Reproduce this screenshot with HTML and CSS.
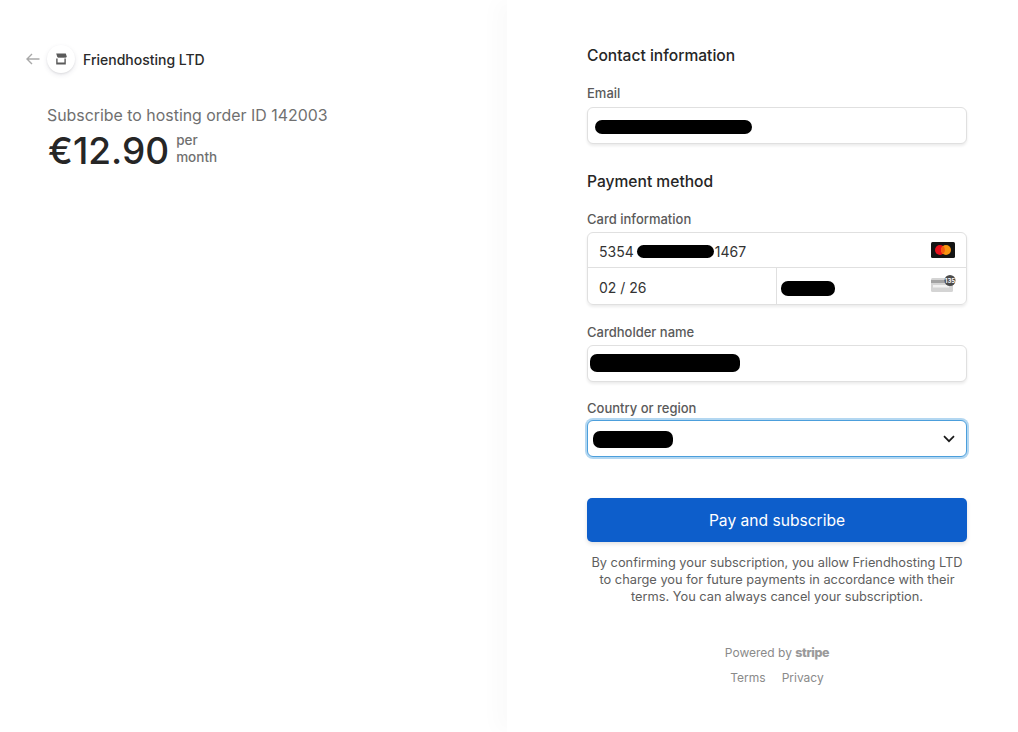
FILE: index.html
```html
<!DOCTYPE html>
<html lang="en">
<head>
    <meta charset="UTF-8">
    <title>Subscribe to hosting order ID 142003</title>
    <link rel="stylesheet" href="styles.css">
</head>
<body>
    <div class="page">
        <div class="summary">
            <div class="merchant">
                <svg class="back" width="14" height="12" viewBox="0 0 14 12" fill="none">
                    <path d="M6 1 1 6l5 5M1 6h12.5" stroke="#a9a9a9" stroke-width="1.4"/>
                </svg>
                <div class="logo">
                    <svg width="12" height="12" viewBox="0 0 12 12">
                        <path d="M1.2 .6h9.6l1 3.2q-.9 1.2-1.9.7-1 .6-1.9 0-1 .6-2 0-.9.6-1.9 0-1 .5-1.9-.7z" fill="#5a5a5a"/>
                        <path d="M1.2 5.4h1.4v4.2h6.8V5.4h1.4v6H1.2z" fill="#5a5a5a"/>
                    </svg>
                </div>
                <span class="merchant-name">Friendhosting LTD</span>
            </div>
            <p class="product">Subscribe to hosting order ID 142003</p>
            <div class="price-row">
                <span class="price">€12.90</span>
                <span class="interval">per<br>month</span>
            </div>
        </div>
        <div class="checkout">
            <h2 class="heading">Contact information</h2>
            <label class="label label-email">Email</label>
            <div class="input">
                <span class="redact redact-email"></span>
            </div>

            <h2 class="heading heading-pay">Payment method</h2>
            <label class="label label-card">Card information</label>
            <div class="card-box">
                <div class="card-row">
                    <span class="card-value">5354<span class="redact redact-number"></span>1467</span>
                    <svg class="brand" width="24" height="16" viewBox="0 0 24 16">
                        <rect width="24" height="16" rx="1.5" fill="#141414"/>
                        <circle cx="9" cy="8" r="5" fill="#e8101c"/>
                        <circle cx="15" cy="8" r="5" fill="#f79410"/>
                        <path d="M12 4a5 5 0 0 1 0 8 5 5 0 0 1 0-8z" fill="#f55a10"/>
                    </svg>
                </div>
                <div class="card-split">
                    <div class="card-expiry">02 / 26</div>
                    <div class="card-cvc">
                        <span class="redact redact-cvc"></span>
                        <svg class="cvc-icon" width="25" height="17" viewBox="0 0 25 17">
                            <rect x="0" y="3" width="22" height="14" rx="1.5" fill="#d4d4d4"/>
                            <rect x="0" y="5" width="22" height="3" fill="#a3a3a3"/>
                            <rect x="2" y="10" width="16" height="2.5" fill="#f2f2f2"/>
                            <circle cx="19" cy="5.5" r="5.5" fill="#4a4a4a"/>
                            <text x="19" y="7.6" font-size="6" font-weight="700" fill="#fff" text-anchor="middle" font-family="Inter, sans-serif">135</text>
                        </svg>
                    </div>
                </div>
            </div>

            <label class="label label-name">Cardholder name</label>
            <div class="input">
                <span class="redact redact-name"></span>
            </div>

            <label class="label label-country">Country or region</label>
            <div class="input input-focus">
                <span class="redact redact-country"></span>
                <svg width="12" height="8" viewBox="0 0 12 8" fill="none">
                    <path d="M1 1.2 6 6.2l5-5" stroke="#1a1a1a" stroke-width="1.7"/>
                </svg>
            </div>

            <button class="pay">Pay and subscribe</button>
            <p class="legal">By confirming your subscription, you allow Friendhosting LTD to charge you for future payments in accordance with their terms. You can always cancel your subscription.</p>

            <div class="powered">Powered by <b class="stripe">stripe</b></div>
            <div class="links">
                <span>Terms</span>
                <span>Privacy</span>
            </div>
        </div>
    </div>
</body>
</html>
```

FILE: styles.css
```css
* {
    margin: 0;
    box-sizing: border-box;
}

body {
    background-color: #fff;
    font-family: Inter, "Liberation Sans", sans-serif;
    color: #1a1a1a;
}

.page {
    display: flex;
    height: 732px;
    overflow: hidden;
}

.summary {
    width: 507px;
    padding: 44px 0 0 26px;
}

.merchant {
    display: flex;
    align-items: center;
    height: 30px;
}

.back {
    margin-right: 7px;
}

.logo {
    width: 28px;
    height: 28px;
    border-radius: 50%;
    background-color: #fff;
    box-shadow: 0 2px 5px rgba(50, 50, 93, 0.1), 0 1px 2px rgba(0, 0, 0, 0.08);
    display: flex;
    align-items: center;
    justify-content: center;
}

.merchant-name {
    margin-left: 8px;
    font-size: 14px;
    font-weight: 450;
    color: #2a2a2a;
}

.product {
    margin: 30px 0 0 21px;
    font-size: 15.9px;
    line-height: 24px;
    font-weight: 400;
    color: #707070;
}

.price-row {
    display: flex;
    align-items: center;
    margin: 1px 0 0 22px;
}

.price {
    font-size: 37px;
    line-height: 44px;
    font-weight: 500;
    color: #262626;
}

.interval {
    margin: -4px 0 0 7px;
    font-size: 13.5px;
    line-height: 17px;
    font-weight: 500;
    color: #707070;
}

.checkout {
    flex: 1;
    padding: 45px 51px 0 80px;
    box-shadow: -12px 0 18px rgba(0, 0, 0, 0.02);
}

.heading {
    font-size: 15.6px;
    line-height: 22px;
    font-weight: 450;
    color: #262626;
}

.heading-pay {
    margin-top: 27px;
}

.label {
    display: block;
    font-size: 13px;
    line-height: 16px;
    font-weight: 450;
    color: #5a5a5a;
}

.label-email {
    margin-top: 18px;
    margin-bottom: 6px;
}

.label-card {
    margin-top: 18px;
    margin-bottom: 5px;
}

.label-name {
    margin-top: 19px;
    margin-bottom: 5px;
}

.label-country {
    margin-top: 18px;
    margin-bottom: 4px;
}

.input {
    height: 37px;
    display: flex;
    align-items: center;
    justify-content: space-between;
    background-color: #fff;
    border: 1px solid #e0e0e0;
    border-radius: 6px;
    box-shadow: 0 2px 3px rgba(0, 0, 0, 0.08);
}

.input-focus {
    border: 1px solid #4c9fdc;
    box-shadow: 0 0 0 2px #b3d7f1;
    padding-right: 11px;
}

.redact {
    display: inline-block;
    background-color: #000;
    border-radius: 7px;
}

.redact-email {
    width: 157px;
    height: 14px;
    margin: 3px 0 0 7px;
}

.redact-name {
    width: 150px;
    height: 18px;
    margin: -2px 0 0 2px;
}

.redact-country {
    width: 80px;
    height: 17px;
    margin: 2px 0 0 5px;
}

.redact-number {
    width: 77px;
    height: 13px;
    margin: 0 1px 0 3px;
    vertical-align: -1px;
}

.redact-cvc {
    width: 54px;
    height: 15px;
    margin: 4px 0 0 4px;
}

.card-box {
    height: 73px;
    border: 1px solid #e0e0e0;
    border-radius: 6px;
    box-shadow: 0 2px 3px rgba(0, 0, 0, 0.08);
    font-size: 14px;
    color: #333;
}

.card-row {
    height: 35px;
    padding: 0 11px;
    display: flex;
    align-items: center;
    justify-content: space-between;
    border-bottom: 1px solid #e0e0e0;
}

.card-value {
    padding-top: 2px;
}

.card-split {
    display: flex;
    height: 36px;
}

.card-expiry {
    width: 189px;
    padding-left: 11px;
    line-height: 39px;
    border-right: 1px solid #e0e0e0;
}

.card-cvc {
    flex: 1;
    display: flex;
    align-items: center;
    justify-content: space-between;
    padding-right: 10px;
}

.cvc-icon {
    margin-top: -5px;
}

.pay {
    display: block;
    width: 380px;
    height: 44px;
    margin-top: 41px;
    border: 0;
    border-radius: 5px;
    background-color: #0d5ecb;
    color: #fff;
    font-family: inherit;
    font-size: 15.6px;
    font-weight: 400;
    box-shadow: 0 2px 4px rgba(0, 0, 0, 0.12);
}

.legal {
    margin-top: 12px;
    font-size: 12.8px;
    line-height: 17px;
    text-align: center;
    color: #5e5e5e;
}

.powered {
    margin-top: 40px;
    font-size: 12px;
    line-height: 16px;
    text-align: center;
    color: #8a8a8a;
}

.stripe {
    font-size: 12.5px;
    font-weight: 800;
    letter-spacing: -0.4px;
    color: #9a9a9a;
}

.links {
    margin-top: 9px;
    display: flex;
    justify-content: center;
    gap: 16px;
    font-size: 12px;
    line-height: 16px;
    color: #8a8a8a;
}
```
